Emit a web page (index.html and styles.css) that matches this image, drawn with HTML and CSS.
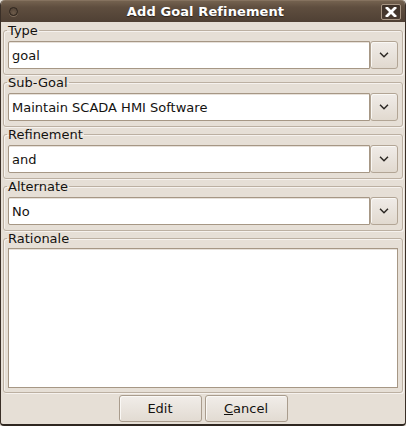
FILE: index.html
```html
<!DOCTYPE html>
<html>
<head>
<meta charset="utf-8">
<link rel="stylesheet" href="styles.css">
</head>
<body>
<div class="window">
  <div class="titlebar">
    <span class="win-dot"></span>
    <span class="title">Add Goal Refinement</span>
    <span class="close-btn">
      <svg width="12" height="10" viewBox="0 0 12 10"><path d="M2 1 L10 9 M10 1 L2 9" stroke="#fff" stroke-width="2.8" stroke-linecap="square"/></svg>
    </span>
  </div>
  <div class="content">
    <fieldset class="frame">
      <legend>Type</legend>
      <div class="combo"><div class="combo-entry">goal</div><div class="combo-btn"><svg width="10" height="6" viewBox="0 0 10 6"><path d="M1 0.8 L5 4.8 L9 0.8" fill="none" stroke="#2e2a26" stroke-width="1.5"/></svg></div></div>
    </fieldset>
    <fieldset class="frame">
      <legend>Sub-Goal</legend>
      <div class="combo"><div class="combo-entry">Maintain SCADA HMI Software</div><div class="combo-btn"><svg width="10" height="6" viewBox="0 0 10 6"><path d="M1 0.8 L5 4.8 L9 0.8" fill="none" stroke="#2e2a26" stroke-width="1.5"/></svg></div></div>
    </fieldset>
    <fieldset class="frame">
      <legend>Refinement</legend>
      <div class="combo"><div class="combo-entry">and</div><div class="combo-btn"><svg width="10" height="6" viewBox="0 0 10 6"><path d="M1 0.8 L5 4.8 L9 0.8" fill="none" stroke="#2e2a26" stroke-width="1.5"/></svg></div></div>
    </fieldset>
    <fieldset class="frame">
      <legend>Alternate</legend>
      <div class="combo"><div class="combo-entry">No</div><div class="combo-btn"><svg width="10" height="6" viewBox="0 0 10 6"><path d="M1 0.8 L5 4.8 L9 0.8" fill="none" stroke="#2e2a26" stroke-width="1.5"/></svg></div></div>
    </fieldset>
    <fieldset class="frame frame-text">
      <legend>Rationale</legend>
      <div class="textarea"></div>
    </fieldset>
    <div class="buttons">
      <button class="btn">Edit</button>
      <button class="btn"><u>C</u>ancel</button>
    </div>
  </div>
</div>
</body>
</html>
```

FILE: styles.css
```css
html, body {
  margin: 0;
  padding: 0;
  background: #e6dfd6;
}
body {
  font-family: "DejaVu Sans", sans-serif;
  font-size: 13px;
  color: #141210;
}
.window {
  width: 406px;
  height: 426px;
  box-sizing: border-box;
  background: #e6dfd6;
  border-left: 1px solid #3a2f27;
  border-right: 1px solid #3a2f27;
  border-bottom: 2px solid #2e2620;
  border-radius: 5px 5px 4px 4px;
  overflow: hidden;
  display: flex;
  flex-direction: column;
}
.titlebar {
  height: 22px;
  flex: none;
  margin: 0 -1px;
  background: linear-gradient(#74624f 0%, #5f4e3f 30%, #4f4034 100%);
  border-top: 1px solid #85725f;
  box-sizing: border-box;
  display: flex;
  align-items: center;
}
.win-dot {
  width: 7px;
  height: 7px;
  margin-left: 9px;
  border-radius: 50%;
  border: 1px solid #2d241d;
  background: radial-gradient(circle at 50% 70%, #6e5c4b, #4c3d31);
  box-shadow: 0 1px 0 #7d6b59;
}
.title {
  flex: 1;
  text-align: center;
  font-weight: bold;
  font-size: 13px;
  color: #ffffff;
  text-shadow: 0 1px 1px #2a2019;
  margin-left: 12px;
  letter-spacing: 0.1px;
}
.close-btn {
  width: 20px;
  height: 16px;
  box-sizing: border-box;
  margin-right: 5px;
  border: 1px solid #a89684;
  border-radius: 2px;
  background: linear-gradient(#3e3128, #4a3b30);
  display: flex;
  align-items: center;
  justify-content: center;
}
.content {
  flex: 1;
  padding: 1px 2px 0 2px;
  display: flex;
  flex-direction: column;
}
.frame {
  margin: 0;
  padding: 3px 4px 5px 4px;
  border: 1px solid #bcb0a2;
  border-radius: 3px;
  box-shadow: inset 1px 1px 0 #f6f2ee, 1px 1px 0 #f6f2ee;
  min-width: 0;
}
.frame legend {
  padding: 0 1px;
  margin-left: -1px;
  line-height: 15px;
  font-size: 13px;
}
.frame-text {
  padding-top: 2px;
  padding-bottom: 4px;
}
.combo {
  display: flex;
  height: 28px;
}
.combo-entry {
  flex: 1;
  background: #ffffff;
  border: 1px solid #a69785;
  border-radius: 2px 0 0 2px;
  box-shadow: inset 0 1px 0 #e7e1da;
  padding-left: 3px;
  display: flex;
  align-items: center;
  white-space: nowrap;
  overflow: hidden;
}
.combo-btn {
  width: 28px;
  flex: none;
  box-sizing: border-box;
  border: 1px solid #b2a595;
  border-radius: 3px;
  background: linear-gradient(#f0ece8, #e1d9cf);
  box-shadow: inset 1px 1px 0 #faf8f5;
  display: flex;
  align-items: center;
  justify-content: center;
}
.textarea {
  height: 140px;
  box-sizing: border-box;
  background: #ffffff;
  border: 1px solid #a69785;
  box-shadow: inset 0 1px 0 #e7e1da;
}
.buttons {
  display: flex;
  justify-content: center;
  gap: 3px;
  margin-top: 2px;
}
.btn {
  width: 83px;
  height: 27px;
  box-sizing: border-box;
  border: 1px solid #a99c8d;
  border-radius: 3px;
  background: linear-gradient(#f1ede9, #e2dbd2);
  box-shadow: inset 1px 1px 0 #faf8f5;
  font-family: "DejaVu Sans", sans-serif;
  font-size: 13px;
  color: #141210;
  padding: 0;
}
.btn u {
  text-decoration: underline;
}
```
